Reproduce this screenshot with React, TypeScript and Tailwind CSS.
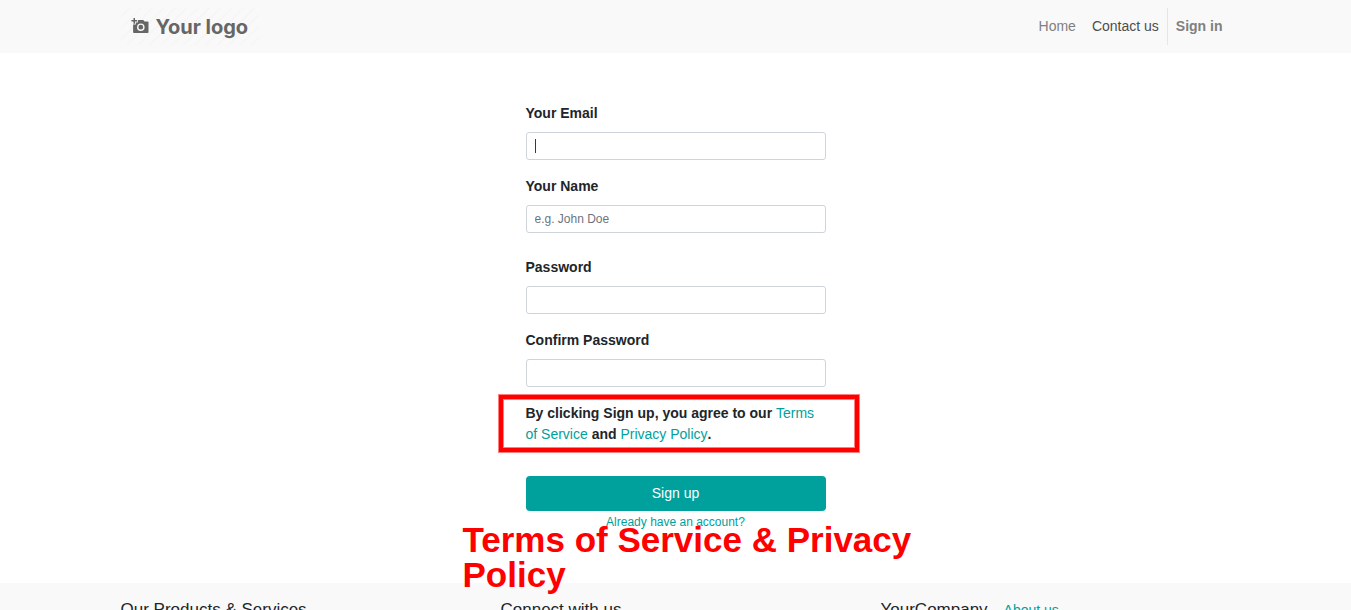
import type { ReactNode } from "react";

type FieldProps = {
  id: string;
  label: string;
  type: string;
  placeholder?: string;
  active?: boolean;
};

function Field({ id, label, type, placeholder, active }: FieldProps) {
  return (
    <div className="flex flex-col gap-2">
      <label htmlFor={id} className="font-bold">
        {label}
      </label>
      <div className="relative flex">
        <input
          id={id}
          name={id}
          type={type}
          placeholder={placeholder}
          className="h-7 w-full rounded-[3px] border border-[#ced4da] bg-white px-2 text-xs text-[#495057] outline-none placeholder:text-[#6c757d]"
        />
        {active && <span className="absolute top-[7px] left-[9px] h-3.5 w-px bg-[#343a40]" />}
      </div>
    </div>
  );
}

function TealLink({ href, children }: { href: string; children: ReactNode }) {
  return (
    <a href={href} className="font-normal text-[#00a09d]">
      {children}
    </a>
  );
}

function Logo() {
  return (
    <a
      href="#home"
      aria-label="Your logo"
      className="flex h-[37px] w-[138px] items-center gap-[7px] bg-[repeating-linear-gradient(135deg,#f9f9f9_0px,#f9f9f9_5px,#f5f5f5_6px,#f9f9f9_8px)] pl-2.5 text-[#666]"
    >
      <svg viewBox="0 0 18 18" className="size-[18px]" fill="currentColor" aria-hidden="true">
        <path d="M2.5 0H4v2.1h2.1v1.5H4v2.1H2.5V3.6H.4V2.1h2.1z" />
        <path
          fillRule="evenodd"
          d="M7.4 2.1h4.9l1.2 1.4h3.2c.5 0 .8.3.8.8v9.9c0 .5-.3.8-.8.8H2.9c-.5 0-.8-.3-.8-.8V6.5h2.7V4.4h2V2.7zM9.8 5.4a3.8 3.8 0 1 0 0 7.6 3.8 3.8 0 0 0 0-7.6zm0 1.4a2.4 2.4 0 1 1 0 4.8 2.4 2.4 0 0 1 0-4.8z"
        />
      </svg>
      <span className="font-[Inter,sans-serif] text-xl leading-6 font-bold whitespace-nowrap">Your logo</span>
    </a>
  );
}

export default function App() {
  return (
    <div className="flex h-screen flex-col overflow-hidden bg-white font-['Liberation_Sans',Arial,sans-serif] text-sm leading-[21px] text-[#212529]">
      <header className="shrink-0 bg-[#f9f9f9] py-2">
        <div className="mx-auto flex max-w-[1140px] items-center justify-between px-[15px]">
          <Logo />
          <nav className="flex h-[37px] items-center">
            <a href="#home" className="px-2 text-[#808080]">
              Home
            </a>
            <a href="#contact" className="px-2 text-[#4d4d4d]">
              Contact us
            </a>
            <a href="#signin" className="flex h-full items-center border-l border-[#e6e6e6] px-2 font-bold text-[#808080]">
              Sign in
            </a>
          </nav>
        </div>
      </header>

      <main className="shrink-0 px-4 pt-[50px] pb-[52px]">
        <form className="mx-auto flex max-w-[300px] flex-col gap-4" onSubmit={(e) => e.preventDefault()}>
          <Field id="email" label="Your Email" type="text" active />
          <Field id="name" label="Your Name" type="text" placeholder="e.g. John Doe" />
          <div className="flex flex-col gap-4 pt-2">
            <Field id="password" label="Password" type="password" />
            <Field id="confirm" label="Confirm Password" type="password" />
          </div>
          <div className="relative">
            <p className="font-bold">
              By clicking Sign up, you agree to our <TealLink href="#terms">Terms of Service</TealLink> and{" "}
              <TealLink href="#privacy">Privacy Policy</TealLink>.
            </p>
            <div className="pointer-events-none absolute -top-2 -right-[33px] -bottom-[7px] -left-[27px] border-4 border-[#ff0000] shadow-[0_0_0_1px_rgba(255,0,0,0.5),inset_0_0_0_1px_rgba(255,0,0,0.5)]" />
          </div>
          <div className="relative flex flex-col items-center gap-0.5 pt-[15px]">
            <button type="submit" className="h-[35px] w-full rounded-[4px] bg-[#00a09d] text-white">
              Sign up
            </button>
            <a href="#login" className="text-xs leading-[18px] text-[#00a09d]">
              Already have an account?
            </a>
            <strong className="pointer-events-none absolute top-[61px] -left-[63px] w-[460px] text-[35px] leading-[35px] font-bold text-[#ff0000]">
              Terms of Service &amp; Privacy Policy
            </strong>
          </div>
        </form>
      </main>

      <footer className="flex-1 bg-[#f9f9f9] pt-4">
        <div className="mx-auto grid max-w-[1140px] grid-cols-3">
          <h2 className="px-[15px] text-[17px] leading-[22px]">Our Products &amp; Services</h2>
          <h2 className="px-[15px] text-[17px] leading-[22px]">Connect with us</h2>
          <div className="flex items-baseline gap-4 px-[15px]">
            <h2 className="text-[17px] leading-[22px]">YourCompany</h2>
            <TealLink href="#about">About us</TealLink>
          </div>
        </div>
      </footer>
    </div>
  );
}
